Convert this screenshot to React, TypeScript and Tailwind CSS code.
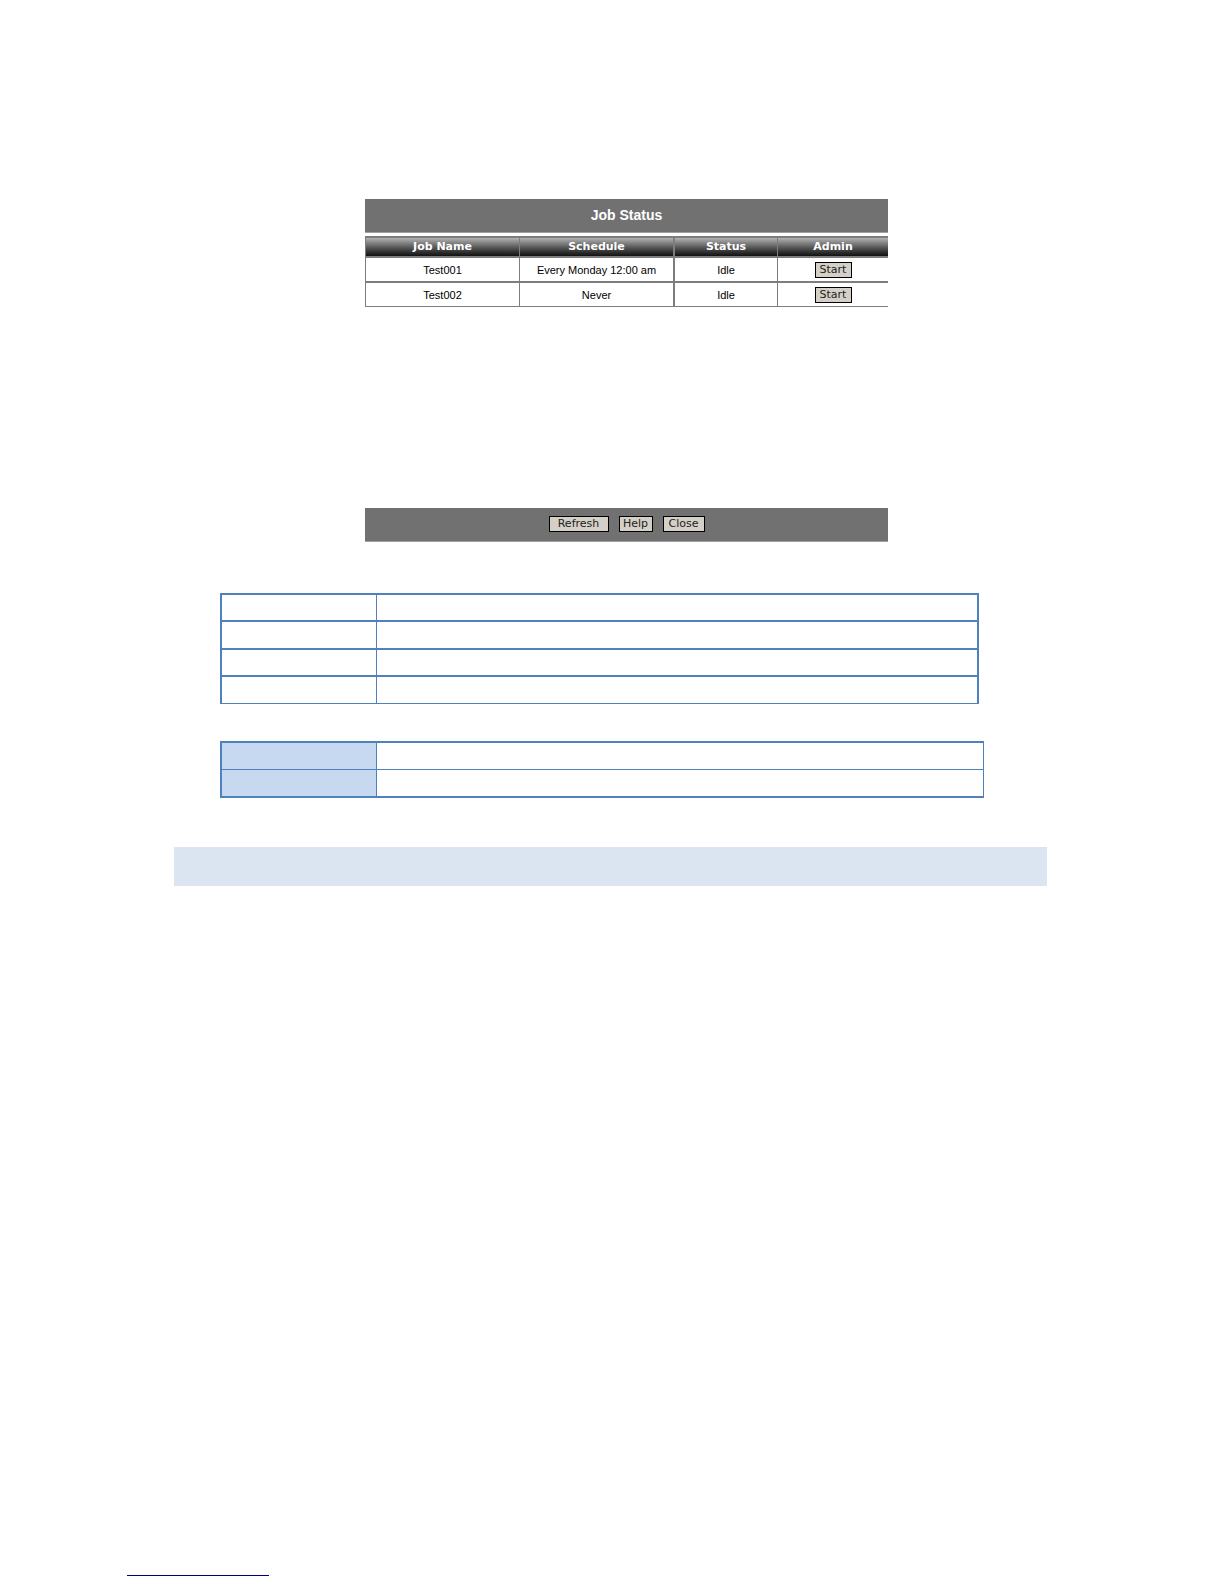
import clsx from "clsx";

interface Job {
  name: string;
  schedule: string;
  status: string;
}

const jobs: Job[] = [
  { name: "Test001", schedule: "Every Monday 12:00 am", status: "Idle" },
  { name: "Test002", schedule: "Never", status: "Idle" },
];

interface PanelButtonProps {
  label: string;
  className?: string;
}

function PanelButton({ label, className }: PanelButtonProps) {
  return (
    <button
      type="button"
      className={clsx(
        "h-4 border border-black bg-[#d4d0c8] text-center font-['DejaVu_Sans',sans-serif] text-[11px] leading-[14px] text-[#222]",
        className,
      )}
    >
      {label}
    </button>
  );
}

function JobTable() {
  return (
    <table className="mt-[3px] w-full table-fixed border-separate border-spacing-0 border-l border-[#7d7d7d] text-center text-[11px] text-black">
      <colgroup>
        <col className="w-[154px]" />
        <col className="w-[155px]" />
        <col className="w-[103px]" />
        <col />
      </colgroup>
      <thead>
        <tr className="h-[22px] font-['DejaVu_Sans',sans-serif] leading-[18px] text-white">
          {["Job Name", "Schedule", "Status", "Admin"].map((heading) => (
            <th
              key={heading}
              scope="col"
              className="border-y-2 border-r border-[#7d7d7d] bg-linear-to-b from-[#b4b4b4] to-[#121212] bg-clip-padding p-0 font-bold last:border-r-0 nth-2:border-r-2"
            >
              {heading}
            </th>
          ))}
        </tr>
      </thead>
      <tbody>
        {jobs.map((job) => (
          <tr
            key={job.name}
            className="h-[25px] leading-4 *:border-b-2 *:border-[#7d7d7d] *:p-0 last:h-6 last:*:border-b"
          >
            <td className="border-r">{job.name}</td>
            <td className="border-r-2">{job.schedule}</td>
            <td className="border-r">{job.status}</td>
            <td>
              <PanelButton label="Start" className="mx-auto block w-[37px]" />
            </td>
          </tr>
        ))}
      </tbody>
    </table>
  );
}

function JobStatusPanel() {
  return (
    <section className="ml-[191px] mr-[159px]">
      <header className="flex h-[34px] items-center justify-center border-b border-[#a0a0a0] bg-[#717171] pb-px">
        <h1 className="text-sm font-bold text-white">Job Status</h1>
      </header>
      <JobTable />
      <footer className="mt-[201px] flex h-[34px] items-center justify-center gap-[10px] border-b border-[#a0a0a0] bg-[#717171] pb-px">
        <PanelButton label="Refresh" className="w-[60px]" />
        <PanelButton label="Help" className="w-[34px]" />
        <PanelButton label="Close" className="w-[42px]" />
      </footer>
    </section>
  );
}

export default function App() {
  return (
    <main className="bg-white pt-[199px] font-['Liberation_Sans',Arial,sans-serif]">
      <div className="ml-[174px] mr-[177px]">
        <JobStatusPanel />

        <div className="ml-[46px] mr-[68px] mt-[51px] border-x-2 border-b border-[#4f81bd]">
          {[0, 1, 2, 3].map((row) => (
            <div
              key={row}
              className="grid h-[27px] grid-cols-[155px_1fr] border-t-2 border-[#4f81bd] even:h-7"
            >
              <div className="border-r border-[#4f81bd]" />
            </div>
          ))}
        </div>

        <div className="ml-[46px] mr-[63px] mt-[37px] border-2 border-r border-[#4f81bd]">
          <div className="grid h-[27px] grid-cols-[155px_1fr] border-b border-[#4f81bd]">
            <div className="border-r border-[#4f81bd] bg-[#c6d9f1]" />
          </div>
          <div className="grid h-[26px] grid-cols-[155px_1fr]">
            <div className="border-r border-[#4f81bd] bg-[#c6d9f1]" />
          </div>
        </div>

        <div className="mt-[49px] h-[39px] bg-[#dbe5f1]" />
      </div>

      <div className="ml-[127px] mt-[689px] mb-2 w-[142px] border-t border-[#000080]" />
    </main>
  );
}
